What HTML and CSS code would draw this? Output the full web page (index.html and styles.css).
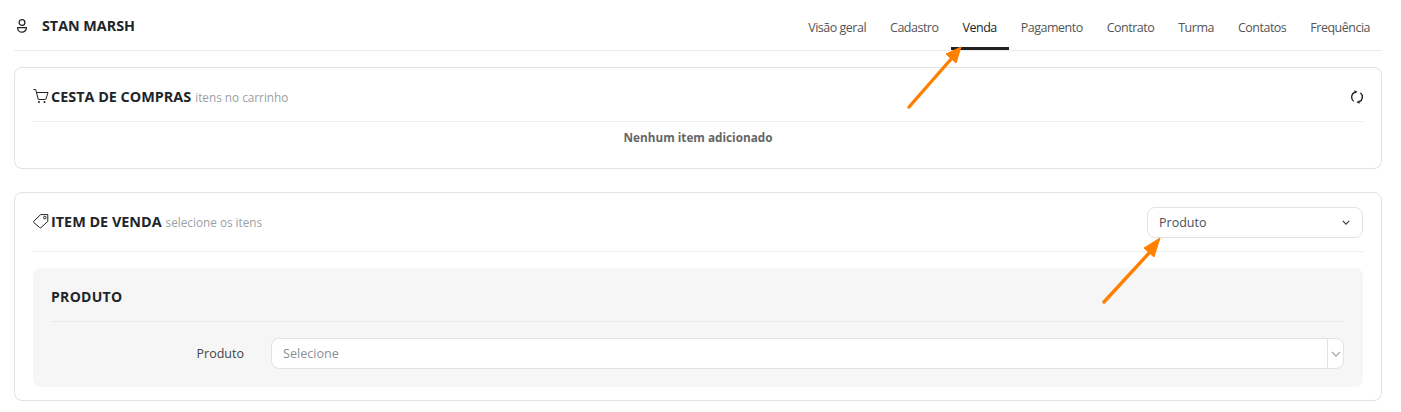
FILE: index.html
```html
<!DOCTYPE html>
<html lang="pt">
<head>
<meta charset="utf-8">
<title>Stan Marsh</title>
<link rel="stylesheet" href="styles.css">
</head>
<body>
<div class="page">
  <header class="topbar">
    <div class="person">
      <svg class="person-icon" viewBox="0 0 12 18" width="12" height="18"><circle cx="5" cy="6.5" r="2.9"/><path d="M.7 11.6h8.6v.6a4.3 4 0 0 1-8.6 0z"/></svg>
      <span class="person-name">STAN MARSH</span>
    </div>
    <nav class="tabs">
      <a class="tab">Visão geral</a>
      <a class="tab">Cadastro</a>
      <a class="tab active">Venda</a>
      <a class="tab">Pagamento</a>
      <a class="tab">Contrato</a>
      <a class="tab">Turma</a>
      <a class="tab">Contatos</a>
      <a class="tab">Frequência</a>
    </nav>
  </header>

  <section class="card card-cart">
    <div class="card-head head-cart">
      <div class="title-wrap">
        <svg class="title-icon" viewBox="0 0 16 16" width="16" height="16"><path d="M.5 1.5h2.2l2.6 10h7.2M3.6 4.5h11.4l-2.2 7"/><circle class="dot" cx="6" cy="14" r="1"/><circle class="dot" cx="11.5" cy="14" r="1"/></svg>
        <h2 class="card-title">CESTA DE COMPRAS</h2>
        <span class="card-sub">itens no carrinho</span>
      </div>
      <svg class="refresh" viewBox="0 0 14 14" width="14" height="14"><path d="M4.8 2.2A5.3 5.3 0 0 0 3.6 11.2M9.2 11.8A5.3 5.3 0 0 0 10.4 2.8"/><path class="fill" d="M7.6 1.8 4.4.2 4.6 3.8zM6.4 12.2l3.2 1.6-.2-3.6z"/></svg>
    </div>
    <p class="empty">Nenhum item adicionado</p>
  </section>

  <section class="card card-item">
    <div class="card-head head-item">
      <div class="title-wrap">
        <svg class="title-icon" viewBox="0 0 16 16" width="16" height="16"><path d="M.8 8.2 7.6 1.6h7.2v6.8L8 14.6a1 1 0 0 1-1.3 0L.8 9.5a.9.9 0 0 1 0-1.3z"/><circle cx="11.8" cy="4.6" r="1.3"/></svg>
        <h2 class="card-title">ITEM DE VENDA</h2>
        <span class="card-sub">selecione os itens</span>
      </div>
      <div class="type-select">
        <span>Produto</span>
        <svg viewBox="0 0 10 6" width="8" height="5"><path d="M1 1l4 4 4-4"/></svg>
      </div>
    </div>
    <div class="panel">
      <h3 class="panel-title">PRODUTO</h3>
      <div class="field">
        <label class="field-label">Produto</label>
        <div class="combo">
          <span class="combo-value">Selecione</span>
          <span class="combo-arrow"><svg viewBox="0 0 10 6" width="10" height="6"><path d="M1 1l4 4 4-4"/></svg></span>
        </div>
      </div>
    </div>
  </section>
</div>

<svg class="arrows" width="1401" height="412" viewBox="0 0 1401 412">
  <path class="shaft" d="M909 107 952 58"/>
  <path class="head" d="M961 47 946 54 956 63z"/>
  <path class="shaft" d="M1104 302 1150 252"/>
  <path class="head" d="M1160 238 1144 248 1154 257z"/>
</svg>
</body>
</html>
```
FILE: styles.css
```css
* { box-sizing: border-box; }
html, body { margin: 0; background: #fff; }
body {
  font-family: "Open Sans", sans-serif;
  color: #212529;
  height: 412px;
  overflow: hidden;
  position: relative;
}
.page { padding: 0 19px 0 14px; }

.topbar {
  height: 51px;
  display: flex;
  justify-content: space-between;
  align-items: stretch;
  border-bottom: 1px solid #ececec;
}
.person { display: flex; align-items: center; padding: 0 0 0 3px; }
.person-icon { fill: none; stroke: #222; stroke-width: 1.3; margin-right: 13px; }
.person-name { font-size: 14.3px; font-weight: 700; color: #212529; }

.tabs { display: flex; }
.tab {
  font-size: 12.5px;
  letter-spacing: -.5px;
  color: #555;
  padding: 0 12px;
  height: 50px;
  display: flex;
  align-items: center;
  padding-top: 4px;
}
.tab.active { color: #212529; border-bottom: 3px solid #222; padding-top: 7px; }

.card { border: 1px solid #e2e2e2; border-radius: 8px; background: #fff; padding: 0 18px; }
.card-cart { margin-top: 16px; height: 102px; }
.card-item { margin-top: 23px; height: 209px; }

.card-head { display: flex; justify-content: space-between; align-items: center; border-bottom: 1px solid #ececec; }
.head-cart { height: 54px; padding-top: 3px; }
.head-item { height: 59px; }
.title-wrap { display: flex; align-items: center; }
.head-item .title-wrap { margin-top: -2px; }
.title-icon { fill: none; stroke: #222; stroke-width: 1; margin-right: 2px; }
.title-icon .dot { fill: #222; stroke: none; }
.card-title { margin: 0; font-size: 14.4px; font-weight: 700; color: #212529; }
.card-sub { font-size: 11.75px; color: #9a9fa5; margin-left: 4px; padding-top: 2px; }
.refresh { fill: none; stroke: #222; stroke-width: 1.4; margin: 2px -1px 0 0; }
.refresh .fill { fill: #222; stroke: none; }

.empty { margin: 0; text-align: center; font-size: 11.75px; font-weight: 700; color: #666; padding-top: 7px; line-height: 16px; }

.type-select {
  width: 216px;
  height: 31px;
  border: 1px solid #e2e2e2;
  border-radius: 8px;
  padding: 0 12px 0 11px;
  display: flex;
  justify-content: space-between;
  align-items: center;
  font-size: 12.5px;
  color: #495057;
}
.type-select svg { fill: none; stroke: #343a40; stroke-width: 1.4; }

.panel { margin-top: 16px; height: 119px; background: #f6f6f6; border-radius: 8px; padding: 0 19px 0 18px; }
.panel-title { margin: 0; height: 54px; padding-top: 4px; display: flex; align-items: center; font-size: 14px; font-weight: 700; color: #212529; letter-spacing: .3px; border-bottom: 1px solid #e9e9e9; }
.field { display: flex; align-items: center; margin-top: 16px; }
.field-label { width: 193px; text-align: right; font-size: 12.5px; color: #444; margin-right: 27px; }
.combo {
  flex: 1;
  height: 31px;
  border: 1px solid #e2e2e2;
  border-radius: 8px;
  background: #fff;
  display: flex;
  align-items: center;
  justify-content: space-between;
}
.combo-value { font-size: 12.6px; color: #8a8f94; padding-left: 11px; }
.combo-arrow { width: 16px; height: 100%; border-left: 1px solid #e2e2e2; display: flex; align-items: center; justify-content: center; }
.combo-arrow svg { fill: none; stroke: #aaa; stroke-width: 1.3; }

.arrows { position: absolute; top: 0; left: 0; pointer-events: none; }
.shaft { fill: none; stroke: #ff8000; stroke-width: 3.4; stroke-linecap: round; }
.head { fill: #ff8000; stroke: #ff8000; stroke-width: 1; stroke-linejoin: round; }
```
